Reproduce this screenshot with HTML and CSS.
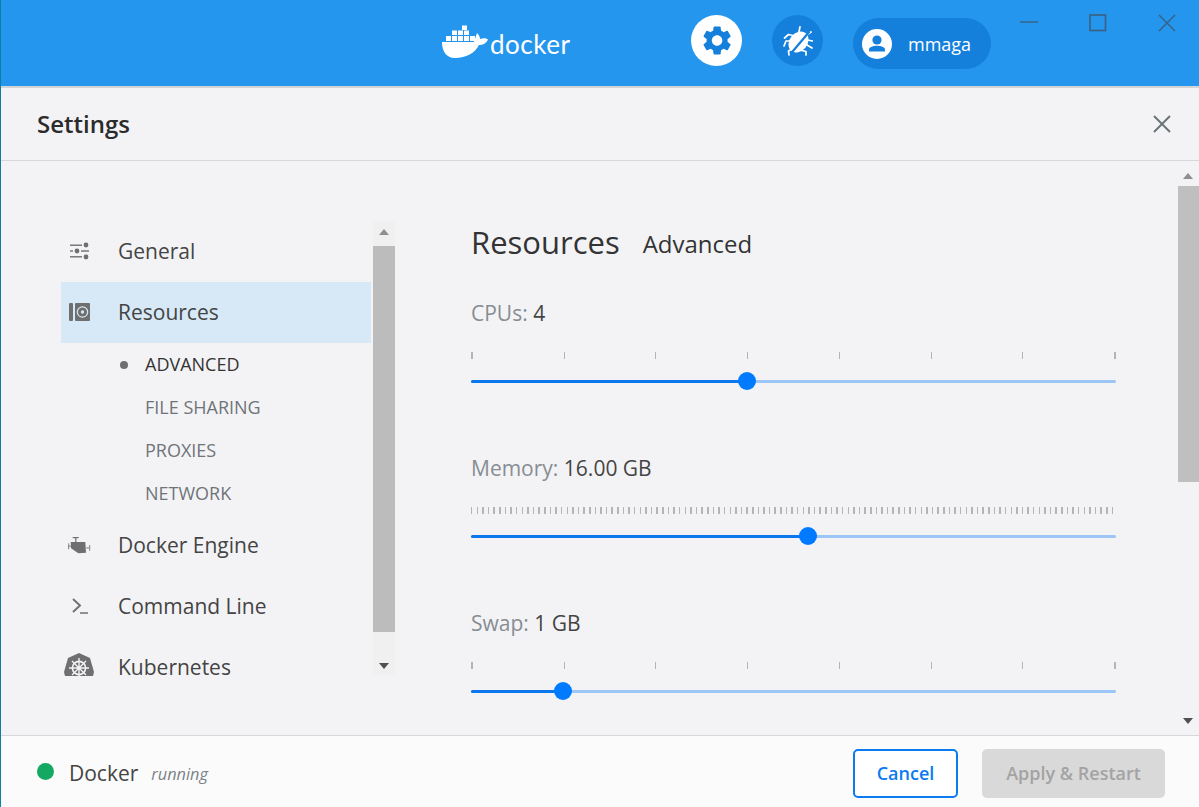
FILE: index.html
```html
<!DOCTYPE html>
<html lang="en">
<head>
  <meta charset="UTF-8" />
  <title>Docker Desktop - Settings</title>
  <link rel="stylesheet" href="styles.css">
</head>
<body>

  <div class="app">
    <header class="topbar">
      <div class="logo">
        <svg class="whale" viewBox="0 0 47 34" width="47" height="34">
          <path fill="#fff" d="M0 17H32C33 14 34 11 35 8C37 10 38 12 38 14C41 13 44 13 46 14.5C44 19 40 20 37 20C33 28 24 33 13 33C4 33 0 26 0 17Z"/>
          <g fill="#fff">
            <rect x="4" y="11" width="5" height="5"/><rect x="10" y="11" width="5" height="5"/><rect x="16" y="11" width="5" height="5"/><rect x="22" y="11" width="5" height="5"/><rect x="28" y="11" width="5" height="5"/>
            <rect x="10" y="5.5" width="5" height="4.5"/><rect x="16" y="5.5" width="5" height="4.5"/><rect x="22" y="5.5" width="5" height="4.5"/>
            <rect x="20" y="0.5" width="5" height="4.5"/>
          </g>
        </svg>
        <span class="logo-text">docker</span>
      </div>

      <div class="round-btn round-btn-white">
        <svg viewBox="-0.4 0 24 24" width="35" height="35"><path fill="#1580dc" d="M19.14 12.94c.04-.3.06-.61.06-.94 0-.32-.02-.64-.07-.94l2.03-1.58a.49.49 0 0 0 .12-.61l-1.92-3.32a.488.488 0 0 0-.59-.22l-2.39.96c-.5-.38-1.03-.7-1.62-.94l-.36-2.54a.484.484 0 0 0-.48-.41h-3.84c-.24 0-.43.17-.47.41l-.36 2.54c-.59.24-1.13.57-1.62.94l-2.39-.96c-.22-.08-.47 0-.59.22L2.74 8.87c-.12.21-.08.47.12.61l2.03 1.58c-.05.3-.09.63-.09.94s.02.64.07.94l-2.03 1.58a.49.49 0 0 0-.12.61l1.92 3.32c.12.22.37.29.59.22l2.39-.96c.5.38 1.03.7 1.62.94l.36 2.54c.05.24.24.41.48.41h3.84c.24 0 .44-.17.47-.41l.36-2.54c.59-.24 1.13-.56 1.62-.94l2.39.96c.22.08.47 0 .59-.22l1.92-3.32c.12-.22.07-.47-.12-.61l-2.01-1.58zM12 15.6c-1.98 0-3.6-1.62-3.6-3.6s1.62-3.6 3.6-3.6 3.6 1.62 3.6 3.6-1.62 3.6-3.6 3.6z"/></svg>
      </div>

      <div class="round-btn round-btn-dark">
        <svg viewBox="0 0 30 30" width="30" height="30">
          <ellipse cx="15.5" cy="16" rx="9" ry="11.5" fill="#fff" transform="rotate(40 15.5 16)"/>
          <g stroke="#fff" stroke-width="1.7" fill="none" stroke-linecap="round" stroke-linejoin="round">
            <path d="M15.5 8L17 .8"/><path d="M22 10L28 6"/>
            <path d="M10 9.5L5.5 8.5L1.5 12"/><path d="M7 15H3L1 20"/><path d="M9 23L5.5 25L6 29"/>
            <path d="M24.5 14L29.5 15"/><path d="M24 19L29 22"/><path d="M19 24.5L23 25.5V29"/>
          </g>
          <path d="M26.5 5.5L7.5 28" stroke="#1580dc" stroke-width="2.2"/>
        </svg>
      </div>

      <div class="user-pill">
        <span class="avatar">
          <svg viewBox="0 0 30 30" width="30" height="30">
            <circle cx="15" cy="11" r="4.6" fill="#1580dc"/>
            <path fill="#1580dc" d="M7 22.5V20.5C7 18 11.5 16.8 15 16.8S23 18 23 20.5V22.5Z"/>
          </svg>
        </span>
        <span class="user-name">mmaga</span>
      </div>

      <div class="win-controls">
        <svg viewBox="0 0 18 18" width="18" height="18"><path d="M0 8H18" stroke="#3b5f80" stroke-width="1.4"/></svg>
        <svg viewBox="0 0 18 18" width="18" height="18"><rect x="1" y="1" width="15.5" height="15.5" fill="none" stroke="#3b5f80" stroke-width="1.6"/></svg>
        <svg viewBox="0 0 18 18" width="18" height="18"><path d="M1 1L17 17M17 1L1 17" stroke="#3b5f80" stroke-width="1.4"/></svg>
      </div>
    </header>

    <div class="title-row">
      <h1>Settings</h1>
      <svg viewBox="0 0 18 18" width="18" height="18"><path d="M1 1L17 17M17 1L1 17" stroke="#6c7478" stroke-width="2"/></svg>
    </div>

    <div class="page">
      <div class="side">
        <nav class="nav">
          <a class="nav-item">
            <span class="nav-icon">
              <svg viewBox="0 0 22 18" width="22" height="18" fill="#6f6f6f">
                <rect x="1" y="2.5" width="12" height="1.4"/><circle cx="17" cy="3" r="2.4"/>
                <rect x="1" y="8.3" width="3" height="1.4"/><circle cx="8" cy="9" r="2.4"/><rect x="12" y="8.3" width="8" height="1.4"/>
                <rect x="1" y="14.1" width="12" height="1.4"/><circle cx="17" cy="15" r="2.4"/>
              </svg>
            </span>
            General
          </a>
          <a class="nav-item nav-item-active">
            <span class="nav-icon">
              <svg viewBox="0 0 22 18" width="22" height="18">
                <rect x="0" y="0" width="4" height="18" rx="1" fill="#6f6f6f"/>
                <rect x="6" y="0" width="15" height="18" rx="1" fill="#6f6f6f"/>
                <circle cx="13.5" cy="9" r="5.8" fill="#d7e9f6"/>
                <circle cx="13.5" cy="9" r="4.6" fill="#6f6f6f"/>
                <circle cx="13.5" cy="9" r="1.7" fill="#d7e9f6"/>
              </svg>
            </span>
            Resources
          </a>
          <ul class="sub-nav">
            <li class="sub-item sub-item-active">ADVANCED</li>
            <li class="sub-item">FILE SHARING</li>
            <li class="sub-item">PROXIES</li>
            <li class="sub-item">NETWORK</li>
          </ul>
          <a class="nav-item">
            <span class="nav-icon">
              <svg viewBox="1 0 24 18" width="24" height="18" fill="#6f6f6f">
                <rect x="5.7" y="1" width="6" height="1.2"/><rect x="8.2" y="1.5" width="1.2" height="5"/>
                <path d="M3.7 6H18.3L19 16.7L11.3 17.3L4 12.3Z"/>
                <rect x="1" y="7.3" width="1.2" height="6" opacity=".7"/><rect x="1" y="9.6" width="3" height="1.2" opacity=".7"/>
                <rect x="22" y="9" width="1.2" height="5.7" opacity=".7"/><rect x="19" y="11.3" width="3" height="1.2" opacity=".7"/>
              </svg>
            </span>
            Docker Engine
          </a>
          <a class="nav-item">
            <span class="nav-icon">
              <svg viewBox="0 0 22 18" width="22" height="18" fill="none" stroke="#6f6f6f" stroke-width="1.9">
                <path d="M4 2L11 8.5L4 15"/><path d="M11 16H19" stroke-width="1.5"/>
              </svg>
            </span>
            Command Line
          </a>
          <a class="nav-item">
            <span class="nav-icon nav-icon-cut">
              <svg viewBox="0 0 30 23" width="30" height="23">
                <path fill="#6f6f6f" d="M15 0L26 5L30 19L29 23H1L0 19L4 5Z"/>
                <g stroke="#f3f3f6" fill="none">
                  <circle cx="15" cy="15" r="6.6" stroke-width="1.6"/>
                  <path d="M15 5V23M5 15H25M8 8L22 22M22 8L8 22" stroke-width="1.4"/>
                </g>
              </svg>
            </span>
            Kubernetes
          </a>
        </nav>
        <div class="scroll scroll-side">
          <span class="arrow arrow-up"></span>
          <span class="thumb"></span>
          <span class="arrow arrow-down"></span>
        </div>
      </div>

      <main class="content">
        <div class="heading">
          <h2>Resources</h2>
          <span class="heading-sub">Advanced</span>
        </div>

        <section class="field">
          <div class="field-label">CPUs: <b>4</b></div>
          <div class="ticks">
            <i></i><i></i><i></i><i></i><i></i><i></i><i></i><i></i>
          </div>
          <div class="track">
            <div class="fill" style="width: 42.8%"><span class="knob"></span></div>
          </div>
        </section>

        <section class="field">
          <div class="field-label">Memory: <b>16.00 GB</b></div>
          <div class="ticks ticks-dense"></div>
          <div class="track">
            <div class="fill" style="width: 52.3%"><span class="knob"></span></div>
          </div>
        </section>

        <section class="field">
          <div class="field-label">Swap: <b>1 GB</b></div>
          <div class="ticks">
            <i></i><i></i><i></i><i></i><i></i><i></i><i></i><i></i>
          </div>
          <div class="track">
            <div class="fill" style="width: 14.2%"><span class="knob"></span></div>
          </div>
        </section>
      </main>

      <div class="scroll scroll-main">
        <span class="arrow arrow-up"></span>
        <span class="thumb"></span>
        <span class="arrow arrow-down"></span>
      </div>
    </div>

    <footer class="footer">
      <span class="status-dot"></span>
      <span class="status-name">Docker</span>
      <span class="status-state">running</span>
      <button class="btn btn-cancel">Cancel</button>
      <button class="btn btn-apply">Apply &amp; Restart</button>
    </footer>
  </div>

</body>
</html>
```

FILE: styles.css
```css
* {
  box-sizing: border-box;
}
body {
  margin: 0;
  font-family: 'Open Sans', sans-serif;
  color: #333;
  background: #f3f3f6;
}
.app {
  display: flex;
  flex-direction: column;
  width: 1199px;
  height: 807px;
  overflow: hidden;
  border-left: 1px solid #0b7fa6;
}

/* top bar */
.topbar {
  flex: none;
  display: flex;
  align-items: flex-start;
  height: 88px;
  padding-left: 441px;
  background: #2496ed;
  border-bottom: 2px solid #d2d4d6;
}
.logo {
  display: flex;
  align-items: flex-end;
  width: 249px;
  height: 59px;
  padding-top: 25px;
}
.logo-text {
  margin-left: 1px;
  font-family: 'Lato', sans-serif;
  font-size: 26px;
  line-height: 30px;
  color: #fff;
  letter-spacing: 0.5px;
}
.round-btn {
  display: flex;
  align-items: center;
  justify-content: center;
  width: 51px;
  height: 51px;
  margin-top: 15px;
  border-radius: 50%;
}
.round-btn-white {
  background: #fff;
}
.round-btn-dark {
  margin-left: 30px;
  background: #1580dc;
}
.user-pill {
  display: flex;
  align-items: center;
  width: 138px;
  height: 51px;
  margin-top: 18px;
  margin-left: 30px;
  padding-left: 9px;
  border-radius: 26px;
  background: #1580dc;
}
.avatar {
  display: block;
  width: 30px;
  height: 30px;
  border-radius: 50%;
  background: #fff;
}
.user-name {
  margin-left: 16px;
  font-size: 18px;
  color: #fff;
}
.win-controls {
  display: flex;
  gap: 51px;
  margin-top: 14px;
  margin-left: 29px;
}

/* settings title */
.title-row {
  flex: none;
  display: flex;
  align-items: center;
  justify-content: space-between;
  height: 73px;
  padding: 0 28px 1px 36px;
  border-bottom: 1px solid #d8d8da;
}
.title-row h1 {
  margin: 0;
  font-size: 24px;
  font-weight: 600;
  color: #2b2b2b;
}

.page {
  flex: 1;
  display: flex;
  min-height: 0;
  overflow: hidden;
}

/* left menu */
.side {
  flex: none;
  display: flex;
  height: 454px;
  margin-top: 60px;
  margin-left: 60px;
}
.nav {
  width: 310px;
}
.nav-item {
  display: flex;
  align-items: center;
  height: 61px;
  padding-bottom: 1px;
  font-size: 21px;
  color: #444;
}
.nav-item-active {
  background: #d7e9f6;
}
.nav-icon {
  display: flex;
  align-items: center;
  justify-content: center;
  width: 38px;
  margin-right: 19px;
}
.nav-icon-cut svg {
  margin-right: 2px;
  margin-bottom: 6px;
}
.sub-nav {
  margin: 0;
  padding: 0 0 0 84px;
  list-style: none;
}
.sub-item {
  position: relative;
  height: 43px;
  font-size: 18px;
  line-height: 43px;
  color: #6f7478;
}
.sub-item-active {
  color: #333;
}
.sub-item-active::before {
  content: "";
  position: absolute;
  left: -25px;
  top: 18px;
  width: 8px;
  height: 8px;
  border-radius: 50%;
  background: #6f6f6f;
}

/* scrollbars */
.scroll {
  position: relative;
  flex: none;
}
.scroll-side {
  width: 22px;
  margin-left: 2px;
  padding-top: 25px;
  background: #f0f0f0;
}
.scroll-side .thumb {
  display: block;
  height: 386px;
  background: #bcbcbc;
}
.scroll-main {
  width: 21px;
  height: 565px;
  margin-top: 4px;
  padding-top: 21px;
}
.scroll-main .thumb {
  display: block;
  height: 296px;
  background: #bfbfbf;
}
.arrow {
  position: absolute;
  left: 50%;
  margin-left: -5.5px;
  border-left: 5.5px solid transparent;
  border-right: 5.5px solid transparent;
}
.arrow-up {
  top: 8px;
  border-bottom: 6px solid #8f8f8f;
}
.arrow-down {
  bottom: 6px;
  border-top: 6px solid #505050;
}

/* sliders */
.content {
  flex: 1;
  min-width: 0;
  padding: 62px 62px 0 76px;
}
.heading {
  display: flex;
  align-items: flex-start;
  gap: 23px;
  height: 78px;
}
.heading h2 {
  margin: 0;
  font-size: 31px;
  font-weight: 400;
  line-height: 38px;
  color: #333;
}
.heading-sub {
  padding-top: 4px;
  font-size: 24px;
  line-height: 33px;
  color: #333;
}
.field {
  margin-bottom: 73px;
}
.field-label {
  height: 24px;
  font-size: 21px;
  line-height: 24px;
  color: #878d92;
}
.field-label b {
  font-weight: 400;
  color: #444;
}
.ticks {
  display: flex;
  justify-content: space-between;
  height: 7px;
  margin-top: 27px;
}
.ticks i {
  display: block;
  width: 1px;
  background: #b4b4b4;
}
.ticks i:first-child,
.ticks i:last-child {
  width: 2px;
}
.ticks-dense {
  background: repeating-linear-gradient(90deg, #b4b4b4 0, #b4b4b4 1.5px, transparent 1.5px, transparent 5.62px);
}
.track {
  height: 3px;
  margin-top: 21px;
  border-radius: 2px;
  background: #9cc6f5;
}
.fill {
  position: relative;
  height: 3px;
  border-radius: 2px;
  background: #0a78ec;
}
.knob {
  position: absolute;
  top: -8px;
  right: -9px;
  width: 18px;
  height: 18px;
  border-radius: 50%;
  background: #007bff;
}

/* bottom bar */
.footer {
  flex: none;
  display: flex;
  align-items: center;
  height: 72px;
  padding-left: 36px;
  background: #fbfbfb;
  border-top: 1px solid #d8d8da;
}
.status-dot {
  width: 17px;
  height: 17px;
  border-radius: 50%;
  background: #15a862;
}
.status-name {
  margin-left: 15px;
  padding-top: 2px;
  font-size: 21px;
  color: #444;
}
.status-state {
  margin-left: 13px;
  padding-top: 4px;
  font-size: 16.3px;
  font-style: italic;
  color: #7b8287;
}
.btn {
  height: 49px;
  margin-top: 3px;
  border-radius: 5px;
  font-family: 'Open Sans', sans-serif;
  font-size: 18px;
  font-weight: 600;
}
.btn-cancel {
  width: 105px;
  margin-left: auto;
  background: #fff;
  color: #0a7bf0;
  border: 2px solid #0a7bf0;
}
.btn-apply {
  width: 183px;
  margin-left: 24px;
  margin-right: 34px;
  background: #d9d9d9;
  color: #a3a3a3;
  border: none;
}
```
